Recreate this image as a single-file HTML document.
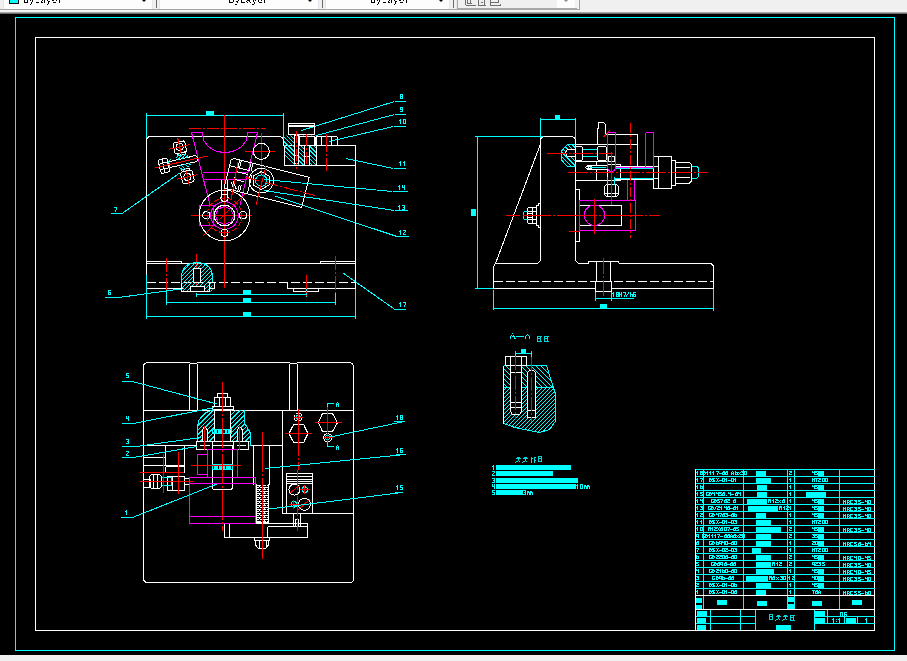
<!DOCTYPE html>
<html><head><meta charset="utf-8">
<style>
html,body{margin:0;padding:0;width:907px;height:661px;overflow:hidden;background:#f0f0f0;}
#tb{position:absolute;left:0;top:0;width:907px;height:9px;background:#f0f0f0;overflow:hidden;}
.dd{position:absolute;top:0;height:9px;background:#fdfdfd;overflow:hidden;}
.sep{position:absolute;top:0;height:9px;width:8px;background:#f0f0f0;border-left:1px solid #e4e6ee;border-right:1px solid #e4e6ee;box-sizing:border-box;}
.sep i{position:absolute;left:3px;top:0;width:1px;height:8px;background:#6a6a6a;}
.arr{position:absolute;top:0;width:0;height:0;border-left:2.5px solid transparent;border-right:2.5px solid transparent;border-top:2px solid #000;}
.tx{position:absolute;top:-7px;font-family:"Liberation Mono",monospace;font-size:12px;line-height:12px;color:#000;white-space:pre;}
#tbb{position:absolute;left:0;top:9px;width:907px;height:5px;background:linear-gradient(#f0f0f0 0,#f0f0f0 1px,#f2f2f2 1px,#f8f8f8 2px,#f0f0f0 2.5px,#b8b8b8 3.2px,#505050 5px);}
#tbl{position:absolute;left:0;top:9px;width:580px;height:1px;background:#a4a4a4;}
#cv{position:absolute;left:0;top:14px;width:907px;height:641px;background:#000;}
svg{position:absolute;left:0;top:0;}
</style></head><body>
<div id="tb">
<div class="dd" style="left:4px;width:148px;"></div>
<div style="position:absolute;left:3px;top:0;width:1px;height:9px;background:#e0e2ea"></div>
<div style="position:absolute;left:9px;top:-1px;width:8px;height:3px;background:#00ffff;border:1px solid #1a0a0a;"></div>

<div class="arr" style="left:142px;"></div>
<div class="sep" style="left:152px;"><i></i></div>
<div class="dd" style="left:160px;width:162px;"></div>

<div class="arr" style="left:308px;"></div>
<div class="sep" style="left:318px;"><i></i></div>
<div class="dd" style="left:326px;width:123px;"></div>

<div class="arr" style="left:439px;"></div>
<div class="sep" style="left:449px;"><i></i></div>
<div style="position:absolute;left:457px;top:-1px;width:120px;height:9px;background:#f0f0f0;border:1px solid #a8a8a8;border-top:none;"></div>
<div style="position:absolute;left:577px;top:0;width:3px;height:10px;background:#f4f4f4;border-right:1px solid #a0a0a0;box-sizing:border-box;"></div><div style="position:absolute;left:557px;top:0;width:18px;height:8px;background:#fcfcfc;"></div>
<svg style="position:absolute;left:0;top:0" width="907" height="9" shape-rendering="crispEdges"><defs><filter id="cr2"><feComponentTransfer><feFuncA type="discrete" tableValues="0 0 1 1"/></feComponentTransfer></filter></defs><g font-family="Liberation Mono, monospace" font-size="9.6px" fill="#000" filter="url(#cr2)"><text x="23" y="3.2">ByLayer</text><text x="228.5" y="3.2">ByLayer</text><text x="370" y="3.2">ByLayer</text></g><path d="M465.5 0V4.5M467.5 0V3.5H471.5M470 0V4M465.5 5.5H476M478.5 0V5.5M484.5 0V5.5M480.5 2.5H483M479 5.5H486M490.5 0V5.5H501M490.5 2.5H498.5V0M500.5 4V5.5" stroke="#6d6d6d" fill="none"/></svg>
<div class="arr" style="left:564px;border-top-color:#8a8a8a;"></div>
</div>
<div id="tbb"></div><div id="tbl"></div>
<div id="cv"></div>
<svg width="907" height="661" viewBox="0 0 907 661" shape-rendering="crispEdges" fill="none" stroke-width="1">
<defs><filter id="cr" x="-5%" y="-20%" width="110%" height="140%"><feComponentTransfer><feFuncA type="discrete" tableValues="0 1 1"/></feComponentTransfer></filter></defs>
<rect x="15.5" y="17.5" width="879" height="633" stroke="#00ffff"/>
<rect x="35.5" y="37.5" width="839" height="593" stroke="#ffffff"/>
<!-- VIEW 1 -->
<g id="v1">
<!-- dimensions cyan -->
<g stroke="#00ffff">
<path d="M146.5 115.5H283.5M146.5 113V140M283.5 113V141"/>
<path d="M196.5 294.5H306.5M166.5 302.5H335.5M146.5 316.5H355.5"/>
<path d="M146.5 275V319M166.5 290V305M196.5 293V297M306.5 289V297M335.5 293V305M355.5 289V319"/>
<!-- leaders -->
<path d="M394.5 101.5H406M394.5 101.5L301.5 130.5"/>
<path d="M394.5 114.5H406M394.5 114.5L316.5 135.5"/>
<path d="M393.5 126.5H406M393.5 126.5L329 141.5"/>
<path d="M393.5 168.5H406M393.5 168.5L346 158.5"/>
<path d="M392.5 191.5H408M392.5 191.5L264 179.5"/>
<path d="M394.5 210.5H408M394.5 210.5L264 190.5"/>
<path d="M397 236.5H409M397 236.5L275 196"/>
<path d="M395 309.5H406M395 309.5L343 273"/>
<path d="M105 297.5H118.5L184.5 288.5"/>
<path d="M112 340.5H123L165 313L" transform="translate(0,0)" opacity="0"/>
</g>
<g fill="#00ffff">
<rect x="206" y="111" width="8" height="4"/>
<rect x="243" y="290" width="8" height="5"/>
<rect x="243" y="298" width="8" height="5"/>
<rect x="243" y="312" width="8" height="5"/>
</g>
<!-- body white -->
<g stroke="#ffffff">
<path d="M146.5 275V140.5Q146.5 136.5 150.5 136.5H279Q283.5 136.5 283.5 141V145.5"/>
<path d="M283.5 145.5H355.5V288.5H287.5V282.5M283.5 165.5H355.5"/>
<path d="M146.5 261.5H181.5V263.5M146.5 263.5H355.5M320.5 263.5V261.5H355.5"/>
<path d="M146.5 282.5H355.5" stroke-dasharray="9 3"/>
<path d="M146.5 288.5H183M293.5 288.5V291.5H318.5V288.5"/>
</g>
<!-- red centerlines -->
<g stroke="#ff0000">
<path d="M224.5 115V287.5"/>
<path d="M189 128.5H266" stroke-dasharray="12 2 2 2"/>
<path d="M166.5 258V290M196.5 254V293M306.5 275V296M335.5 256V293" stroke-dasharray="14 2 2 2"/>
<path d="M245 151.5H275M261.5 133V175"/>
<path d="M191 215.5H252M224.5 215.5"/>
</g>
</g>

<g id="v1b">
<!-- magenta V block -->
<g stroke="#ff00ff">
<path d="M210 205L191.5 132.5H202L204 141Q211 152.5 225 152.5Q239 152.5 246 141L248 132.5H257.5L240 205"/>
<path d="M202.5 172.5H248M204 179.5H245.5M221.5 179.5V186"/>
<rect x="199.5" y="205.5" width="14" height="20"/>
<circle cx="224.5" cy="215.5" r="13.8"/>
<path d="M224.5 206.5L231 209L233.5 215.5L231 222L224.5 224.5L218 222L215.5 215.5L218 209Z"/>
</g>
<!-- flange white -->
<g stroke="#ffffff">
<circle cx="224.5" cy="215.5" r="25.4"/>
<circle cx="224.5" cy="215.5" r="10.3"/>
<circle cx="224.5" cy="197.8" r="3.6"/>
<circle cx="224.5" cy="232.7" r="3.6"/>
<circle cx="206.4" cy="215.2" r="3.6"/>
<circle cx="243" cy="215.2" r="3.6"/>
<path d="M221.5 179.5V198.5M227.5 179.5V198.5"/>
<circle cx="261.3" cy="151.4" r="8"/>
</g>
<g stroke="#ff0000">
<circle cx="224.5" cy="215.5" r="17.3" stroke-dasharray="5 2"/>
<path d="M203 236L246 193" stroke-dasharray="16 2 2 2"/>
</g>
<!-- clamp arm -->
<g transform="translate(231.6,158) rotate(14)" stroke="#ffffff">
<path d="M2 0H80V31H0V2Z"/>
<path d="M0 8H21M8.5 0V8M10 0V8M8 12V20H18M8 12H20M20 1V8M22 1V8M14 24V31M16 24V31M5 23L10 30M7 22L12 29M24 12V31"/>
</g>
<g stroke="#ffffff">
<circle cx="261.3" cy="180.6" r="12.2"/>
<path d="M261.3 171.5L269 176L269 185L261.3 189.5L253.5 185L253.5 176Z"/>
</g>
<circle cx="261.3" cy="180.6" r="5.7" stroke="#00ffff"/>
<path d="M245.4 177.2L314.7 195.4" stroke="#ff0000" stroke-dasharray="14 2 2 2"/>
<path d="M266 166L256 205M238 162L231 200" stroke="#ff0000"/>
<!-- part 7 bolt -->
<g transform="translate(181,162) rotate(-12.6)">
<g stroke="#ffffff">
<path d="M-12 -3H12M-12 3H12M12 -3Q17 -4 17 0Q17 4 12 3"/>
<path d="M-21 -7H-13V7H-21L-22 5V-5ZM-18 -7V7M-21 -3H-13M-21 3H-13"/>
<path d="M-3 -20L-4 -18V-10L-3 -9H7L8 -10V-18L7 -20ZM-2 -9V-7H6V-9"/>
<circle cx="2" cy="-15" r="3.5"/>
<path d="M-2 10L-3 12V20L-2 22H8L9 20V12L8 10ZM-1 10V8H7V10"/>
<circle cx="3" cy="16" r="3.5"/>
</g>
<g stroke="#00ffff"><path d="M-12 -3L-9 -5M-2 -3L3 -8M2 -3L6 -7M6 -3L8 -5M-4 -5L1 -9M-1 3L3 8M3 3L7 7M7 3L9 5M-3 5L1 9M-12 -3V3"/></g>
<g stroke="#ff0000"><path d="M-27 0H28M2 -24V-7M-9 -15H13M3 7V25M-8 16H14"/></g>
</g>
<!-- parts 8,9,10 on block -->
<clipPath id="cpB"><rect x="284" y="135.5" width="33" height="30"/></clipPath>
<g clip-path="url(#cpB)" stroke="#00ffff"><path d="M250.0 120l50 50M254.2 120l50 50M258.4 120l50 50M262.6 120l50 50M266.8 120l50 50M271.0 120l50 50M275.2 120l50 50M279.4 120l50 50M283.6 120l50 50M287.8 120l50 50M292.0 120l50 50M296.2 120l50 50M300.4 120l50 50M304.6 120l50 50M308.8 120l50 50M313.0 120l50 50M317.2 120l50 50M321.4 120l50 50M325.6 120l50 50M329.8 120l50 50M334.0 120l50 50M338.2 120l50 50"/></g>
<g stroke="#ffffff" fill="#000">
<path d="M288.5 123.5H314.5V134.5H288.5Z" fill="none"/>
<path d="M288.5 125.5H314.5M288.5 126.5H314.5" fill="none"/>
<path d="M294.5 135.5V163.5H298.5V135.5Z"/>
<path d="M299.5 136.5H314.5V145.5H299.5Z"/>
<path d="M304.5 145.5V165.5H309.5V145.5Z"/>
<path d="M298.5 155.5H294.5M304.5 156.5H309.5" fill="none"/>
<path d="M284.5 145.5V165.5H316.5V135.5" fill="none"/>
<path d="M317.5 136.5H335.5Q337.5 136.5 337.5 138.5V145.5H315.5V138.5Q315.5 136.5 317.5 136.5ZM321.5 136.5V145.5M331.5 136.5V145.5" fill="none"/>
</g>
<g stroke="#ff0000"><path d="M296.5 131V169M306.5 134V165" stroke-dasharray="12 2 2 2"/><path d="M326.5 134V171" stroke-dasharray="18 2 2 2"/></g>
<!-- part 6 dome -->
<g stroke="#00ffff">
<path d="M181.5 282.5V278Q181.5 263 197 262.5Q212.5 263 212.5 278V282.5"/>
<clipPath id="cpE"><path d="M181.5 291.5V278Q181.5 263 197 262.5Q212.5 263 212.5 278V291.5Z"/></clipPath>
<g clip-path="url(#cpE)"><path d="M150.0 300l40 -40M154.0 300l40 -40M158.0 300l40 -40M162.0 300l40 -40M166.0 300l40 -40M170.0 300l40 -40M174.0 300l40 -40M178.0 300l40 -40M182.0 300l40 -40M186.0 300l40 -40M190.0 300l40 -40M194.0 300l40 -40M198.0 300l40 -40M202.0 300l40 -40M206.0 300l40 -40M210.0 300l40 -40M214.0 300l40 -40M218.0 300l40 -40M222.0 300l40 -40M226.0 300l40 -40"/></g>
</g>
<g fill="#000" stroke="#ffffff"><path d="M193.5 282.5V268H200.5V282.5Z"/><path d="M190.5 286.5H204.5V291.5H190.5Z"/></g>
<g stroke="#ffffff">
<path d="M181.5 282.5V291.5H209V282.5H214.5V288.5H209"/>
</g>
</g>

<g id="v1labels" fill="#00ffff" font-family="Liberation Sans, sans-serif" filter="url(#cr)" font-size="6.5px">
<path fill="#00ffff" stroke="none" d="M400 94h3v1h-3zM400 95h1v1h-1zM402 95h1v1h-1zM400 96h3v1h-3zM400 97h1v1h-1zM402 97h1v1h-1zM400 98h3v1h-3z"/>
<path fill="#00ffff" stroke="none" d="M400 107h3v1h-3zM400 108h1v1h-1zM402 108h1v1h-1zM400 109h3v1h-3zM402 110h1v1h-1zM400 111h3v1h-3z"/>
<path fill="#00ffff" stroke="none" d="M400 119h1v1h-1zM399 120h2v1h-2zM400 121h1v1h-1zM400 122h1v1h-1zM400 123h1v1h-1zM403 119h3v1h-3zM403 120h1v1h-1zM405 120h1v1h-1zM403 121h1v1h-1zM405 121h1v1h-1zM403 122h1v1h-1zM405 122h1v1h-1zM403 123h3v1h-3z"/>
<path fill="#00ffff" stroke="none" d="M400 161h1v1h-1zM399 162h2v1h-2zM400 163h1v1h-1zM400 164h1v1h-1zM400 165h1v1h-1zM404 161h1v1h-1zM403 162h2v1h-2zM404 163h1v1h-1zM404 164h1v1h-1zM404 165h1v1h-1z"/>
<path fill="#00ffff" stroke="none" d="M399 185h1v1h-1zM398 186h2v1h-2zM399 187h1v1h-1zM399 188h1v1h-1zM399 189h1v1h-1zM402 185h1v1h-1zM404 185h1v1h-1zM402 186h1v1h-1zM404 186h1v1h-1zM402 187h3v1h-3zM404 188h1v1h-1zM404 189h1v1h-1z"/>
<path fill="#00ffff" stroke="none" d="M399 205h1v1h-1zM398 206h2v1h-2zM399 207h1v1h-1zM399 208h1v1h-1zM399 209h1v1h-1zM402 205h3v1h-3zM404 206h1v1h-1zM403 207h2v1h-2zM404 208h1v1h-1zM402 209h3v1h-3z"/>
<path fill="#00ffff" stroke="none" d="M400 230h1v1h-1zM399 231h2v1h-2zM400 232h1v1h-1zM400 233h1v1h-1zM400 234h1v1h-1zM403 230h3v1h-3zM405 231h1v1h-1zM404 232h1v1h-1zM403 233h1v1h-1zM403 234h3v1h-3z"/>
<path fill="#00ffff" stroke="none" d="M400 302h1v1h-1zM399 303h2v1h-2zM400 304h1v1h-1zM400 305h1v1h-1zM400 306h1v1h-1zM403 302h3v1h-3zM405 303h1v1h-1zM405 304h1v1h-1zM404 305h1v1h-1zM404 306h1v1h-1z"/>
<path fill="#00ffff" stroke="none" d="M114 207h3v1h-3zM116 208h1v1h-1zM116 209h1v1h-1zM115 210h1v1h-1zM115 211h1v1h-1z"/>
<path fill="#00ffff" stroke="none" d="M108 290h3v1h-3zM108 291h1v1h-1zM108 292h3v1h-3zM108 293h1v1h-1zM110 293h1v1h-1zM108 294h3v1h-3z"/>
</g>
<g stroke="#00ffff"><path d="M111 213.5H122L180.5 172.5"/></g>

<g id="v2">
<g stroke="#00ffff">
<path d="M475 136.5H557M477.5 136.5V288.5M475 288.5H506"/>
<path d="M540.5 119.5H575.5M540.5 118V139M575.5 118V143"/>
<path d="M493.5 308.5H713.5M493.5 290V310M713.5 289V311"/>
<path d="M595.5 298.5H634M595.5 291V301M611.5 291V301"/>

<path d="M575.5 144.5H567.5L561.5 151V160L567.5 166.5H575.5"/>
<clipPath id="cpP"><path d="M575.5 144.5H567.5L561.5 151V160L567.5 166.5H575.5Z"/></clipPath>
<g clip-path="url(#cpP)"><path d="M527.0 140l30 30M531.5 140l30 30M536.0 140l30 30M540.5 140l30 30M545.0 140l30 30M549.5 140l30 30M554.0 140l30 30M558.5 140l30 30M563.0 140l30 30M567.5 140l30 30M572.0 140l30 30M576.5 140l30 30"/></g>
</g>
<g fill="#00ffff">
<rect x="555" y="115" width="5" height="5"/>
<rect x="471" y="209" width="5" height="7"/>
<rect x="600" y="304" width="7" height="5"/>
<path fill="#00ffff" stroke="none" d="M613 292h1v1h-1zM612 293h2v1h-2zM613 294h1v1h-1zM613 295h1v1h-1zM613 296h1v1h-1zM616 292h3v1h-3zM616 293h1v1h-1zM618 293h1v1h-1zM616 294h3v1h-3zM616 295h1v1h-1zM618 295h1v1h-1zM616 296h3v1h-3zM619 292h1v1h-1zM621 292h1v1h-1zM619 293h1v1h-1zM621 293h1v1h-1zM619 294h3v1h-3zM619 295h1v1h-1zM621 295h1v1h-1zM619 296h1v1h-1zM621 296h1v1h-1zM623 292h3v1h-3zM625 293h1v1h-1zM625 294h1v1h-1zM624 295h1v1h-1zM624 296h1v1h-1zM628 292h1v1h-1zM628 293h1v1h-1zM627 294h1v1h-1zM626 295h1v1h-1zM626 296h1v1h-1zM630 292h1v1h-1zM630 293h1v1h-1zM630 294h3v1h-3zM630 295h1v1h-1zM632 295h1v1h-1zM630 296h1v1h-1zM632 296h1v1h-1zM633 292h3v1h-3zM633 293h1v1h-1zM633 294h3v1h-3zM633 295h1v1h-1zM635 295h1v1h-1zM633 296h3v1h-3z"/>
</g>
<g stroke="#ffffff">
<!-- upright -->
<path d="M540.5 260.5V141Q540.5 136.5 545 136.5H571Q575.5 136.5 575.5 141V260.5L578.5 263.5H588.5V261.5H596.5M540.5 260.5L537.5 263.5H495.5L493.5 266.5V288.5H595.5"/>
<path d="M540.5 144L495.5 263.5"/>
<path d="M610.5 261.5H618L619.5 263.5H711L713.5 266V288.5H611.5"/>
<path d="M493.5 281.5H713.5" stroke-dasharray="9 3"/>
<path d="M596.5 261.5V281.5M610.5 261.5V281.5M595.5 281.5V291.5H611.5V281.5M596.5 261.5H610.5M595.5 281.5H611.5"/>
<!-- bolt on upright -->
<path d="M540.5 203.5H538.5V205.5H536.5V225.5H538.5V227.5H540.5M536.5 207.5H528.5L527.5 209V222L528.5 223.5H536.5M527.5 211.5H536.5M527.5 219.5H536.5M532.5 207.5V223.5"/><circle cx="530" cy="215.5" r="2.5"/></g><g stroke="#00ffff"><path d="M527.5 211.5H524.5L523.5 213V218L524.5 219.5H527.5"/></g><g stroke="#ffffff">
<path d="M575.5 189.5H579.5V241.5H575.5"/>
<!-- right blocks -->
<path d="M575.5 149.5H567.5L565.5 153L567.5 156.5H575.5" fill="#000"/>
<path d="M575.5 144.5H637.5M607.5 134.5H637.5V165.5M575.5 161.5H607.5M575.5 180.5H620.5V164.5H607.5V180.5"/>
<path d="M596.5 161.5V180.5"/>
<path d="M597.5 144V131L598.5 126V122.5H603.5L605.5 124.5V133L607 134.5"/>
<rect x="575.5" y="146.5" width="7" height="14" rx="2"/>
<rect x="597.5" y="146.5" width="9" height="14" rx="2"/>
<rect x="608.5" y="156.5" width="6" height="5"/>
<path d="M585.5 167.5L588 165.5H607.5V169.5H588Z" fill="#000"/><rect x="588.5" y="166.5" width="3" height="2"/>
<path d="M579.5 205.5H621.5V225.5H579.5"/>
<!-- big screw -->
<path d="M653.5 156.5H671.5V188.5H653.5ZM658.5 156.5V188.5M653.5 166.5H658.5M653.5 178.5H658.5M671.5 160.5H675.5V185H671.5M675.5 162.5H689.5L691.5 164.5V181L689.5 183H675.5M675.5 167.5H689.5M675.5 177.5H689.5"/>
<path d="M615.5 166.5H653.5M613.5 179.5H653.5"/>
<path d="M606.5 184.5H616.5L618.5 186.5V194.5L616.5 196.5H606.5L604.5 194.5V186.5ZM607.5 184.5V196.5M615.5 184.5V196.5M604.5 193.5H618.5"/></g><g stroke="#00ffff"><path d="M607.5 176.5V184.5M614.5 176.5V184.5"/></g><g stroke="#ffffff">
</g>
<g stroke="#00ffff">
<path d="M691.5 166.5H697L698.5 168V176.5L697 178H691.5M615.5 168H653.5M613.5 178H653.5M582.5 149.5H597.5M582.5 156.5H597.5M590 167.5H606"/>
</g>
<g stroke="#ff00ff">
<path d="M607.5 132.5H615.5V166Q615.5 171.5 611 171.5Q607.5 171.5 607.5 166Z"/>
<path d="M645.5 132.5H653.5V167.5H615.5M645.5 132.5V167.5"/>
<path d="M627.5 179.5V200.5M634.5 179.5V200.5"/>
<rect x="579.5" y="200.5" width="56" height="30"/>
<circle cx="594.5" cy="215.3" r="10.2"/>
</g>
<g stroke="#ff0000">
<path d="M506 215.5H660" stroke-dasharray="14 3 28 2 2 2 40 2 2 2 40 2 2 2"/>
<path d="M594.5 198.5V234M611.5 152V205M569 231.5H580"/>
<path d="M630.5 123V238" stroke-dasharray="10 2 2 2"/>
<path d="M547 153.5H613M568 172.5H708" stroke-dasharray="20 2 2 2"/>
<path d="M603.5 137L610 130"/><path d="M603.5 258V296" stroke-dasharray="16 2 2 2"/>
</g>
</g>

<g id="secAA">
<g stroke="#00ffff"><path d="M512.5 333V334M511.5 335L510.5 336.5V338.5M513.5 335L514.5 336.5V338.5M511.5 336.5H513.5M509.5 338.5H510.5M514.5 338.5H515.5M516 336.5H524M527.5 334V335M526.5 335.5L525.5 337V338.5M528.5 335.5L529.5 337V338.5"/></g>
<path d="M536.5 336.5H541.5M537.5 336.5V341.5M540.5 336.5V341.5M537.5 338.5H540.5M536.5 341.5H541.5M539.5 335.5V336.5M543.5 336.5H548.5M544.5 336.5V341.5M547.5 336.5V341.5M544.5 338.5H547.5M543.5 341.5H548.5M546.5 335.5V336.5" stroke="#00ffff" opacity="0.85"/>
<path d="M515.5 458.5H520.5M518.5 456.5V460.5M515.5 462.5L518.5 460.5L520.5 462.5M516.5 457.5H519.5M522.5 458.5H527.5M525.5 456.5V460.5M522.5 462.5L525.5 460.5L527.5 462.5M523.5 457.5H526.5M531.5 456.5V462.5M530.5 458.5H532.5M533.5 457.5H535.5M534.5 456.5V462.5M533.5 460.5H535.5M534.5 458.5V461.5M538.5 456.5V461.5H541.5V456.5ZM538.5 458.5H541.5M537.5 462.5L538.5 461.5M542.5 462.5L541.5 461.5" stroke="#00ffff" opacity="0.85"/>

<g fill="#00ffff" font-family="Liberation Sans, sans-serif" filter="url(#cr)">


<rect x="521" y="349" width="5" height="5"/>
</g>
<g stroke="#00ffff">
<path d="M515.5 353.5H531.5M515.5 351V357M531.5 351V357"/>
<path d="M503.5 365.5H546.5L553 386.5L555.5 394V421L549.5 429.5L539.5 432.5L515 427.5L503.5 423.5"/>
<path d="M503.5 387.5H553"/>
<clipPath id="cpA1"><path d="M503.5 365.5H546.5L553 386.5V387.5H503.5Z"/></clipPath>
<clipPath id="cpA2"><path d="M503.5 387.5H553L555.5 394V421L549.5 429.5L539.5 432.5L515 427.5L503.5 423.5Z"/></clipPath>
<g clip-path="url(#cpA1)"><path d="M460.0 340l60 60M465.0 340l60 60M470.0 340l60 60M475.0 340l60 60M480.0 340l60 60M485.0 340l60 60M490.0 340l60 60M495.0 340l60 60M500.0 340l60 60M505.0 340l60 60M510.0 340l60 60M515.0 340l60 60M520.0 340l60 60M525.0 340l60 60M530.0 340l60 60M535.0 340l60 60M540.0 340l60 60M545.0 340l60 60M550.0 340l60 60M555.0 340l60 60M560.0 340l60 60M565.0 340l60 60"/></g>
<g clip-path="url(#cpA2)"><path d="M416.0 450l70 -70M420.0 450l70 -70M424.0 450l70 -70M428.0 450l70 -70M432.0 450l70 -70M436.0 450l70 -70M440.0 450l70 -70M444.0 450l70 -70M448.0 450l70 -70M452.0 450l70 -70M456.0 450l70 -70M460.0 450l70 -70M464.0 450l70 -70M468.0 450l70 -70M472.0 450l70 -70M476.0 450l70 -70M480.0 450l70 -70M484.0 450l70 -70M488.0 450l70 -70M492.0 450l70 -70M496.0 450l70 -70M500.0 450l70 -70M504.0 450l70 -70M508.0 450l70 -70M512.0 450l70 -70M516.0 450l70 -70M520.0 450l70 -70M524.0 450l70 -70M528.0 450l70 -70M532.0 450l70 -70M536.0 450l70 -70M540.0 450l70 -70M544.0 450l70 -70M548.0 450l70 -70M552.0 450l70 -70M556.0 450l70 -70M560.0 450l70 -70M564.0 450l70 -70M568.0 450l70 -70M572.0 450l70 -70M576.0 450l70 -70"/></g>
</g>
<g fill="#000" stroke="#ffffff">
<rect x="505.5" y="356.5" width="21" height="9"/>
<path d="M510.5 365.5V411.5L512.5 414.5H519.5L521.5 411.5V365.5Z"/>
<path d="M527.5 417.5V372.5L529.5 370.5H533.5L535.5 372.5V417.5Z"/>
<path d="M503.5 365.5V423.5" fill="none"/>
</g>
<g stroke="#ffffff"><path d="M510.5 356.5V365.5M521.5 356.5V365.5M510.5 402.5H521.5M510.5 407.5H521.5M527.5 410.5H535.5M510.5 372.5H521.5"/></g>
<g stroke="#ff0000"><path d="M515.5 356V419M531.5 357V421.5" stroke-dasharray="14 2 2 2"/></g>
</g>
<g id="tech" fill="#00ffff" font-family="Liberation Sans, sans-serif" filter="url(#cr)" font-size="5px">

<path fill="#00ffff" stroke="none" d="M493 465h1v1h-1zM492 466h2v1h-2zM493 467h1v1h-1zM493 468h1v1h-1zM493 469h1v1h-1zM496 469h1v1h-1z"/><rect x="496" y="465" width="75" height="5"/>
<path fill="#00ffff" stroke="none" d="M492 471h3v1h-3zM494 472h1v1h-1zM493 473h1v1h-1zM492 474h1v1h-1zM492 475h3v1h-3zM496 475h1v1h-1z"/><rect x="496" y="471" width="56.5" height="5"/>
<path fill="#00ffff" stroke="none" d="M492 478h3v1h-3zM494 479h1v1h-1zM493 480h2v1h-2zM494 481h1v1h-1zM492 482h3v1h-3zM496 482h1v1h-1z"/><rect x="496" y="477.7" width="81.5" height="5"/>
<path fill="#00ffff" stroke="none" d="M492 484h1v1h-1zM494 484h1v1h-1zM492 485h1v1h-1zM494 485h1v1h-1zM492 486h3v1h-3zM494 487h1v1h-1zM494 488h1v1h-1zM496 488h1v1h-1z"/><rect x="496" y="484" width="80" height="5"/><path fill="#00ffff" stroke="none" d="M577 484h1v1h-1zM576 485h2v1h-2zM577 486h1v1h-1zM577 487h1v1h-1zM577 488h1v1h-1zM580 484h3v1h-3zM580 485h1v1h-1zM582 485h1v1h-1zM580 486h1v1h-1zM582 486h1v1h-1zM580 487h1v1h-1zM582 487h1v1h-1zM580 488h3v1h-3zM584 485h2v1h-2zM584 486h3v1h-3zM584 487h1v1h-1zM586 487h1v1h-1zM584 488h1v1h-1zM586 488h1v1h-1zM587 485h2v1h-2zM587 486h3v1h-3zM587 487h1v1h-1zM589 487h1v1h-1zM587 488h1v1h-1zM589 488h1v1h-1z"/>
<path fill="#00ffff" stroke="none" d="M492 490h3v1h-3zM492 491h1v1h-1zM492 492h3v1h-3zM494 493h1v1h-1zM492 494h3v1h-3zM496 494h1v1h-1z"/><rect x="496" y="490.3" width="27" height="5"/><path fill="#00ffff" stroke="none" d="M523 490h3v1h-3zM525 491h1v1h-1zM524 492h2v1h-2zM525 493h1v1h-1zM523 494h3v1h-3zM527 491h2v1h-2zM527 492h3v1h-3zM527 493h1v1h-1zM529 493h1v1h-1zM527 494h1v1h-1zM529 494h1v1h-1zM530 491h2v1h-2zM530 492h3v1h-3zM530 493h1v1h-1zM532 493h1v1h-1zM530 494h1v1h-1zM532 494h1v1h-1z"/>
</g>

<g id="v3">
<!-- body -->
<g stroke="#ffffff">
<path d="M143.5 578.5V367Q143.5 362.5 148 362.5H189.5L190.5 363.5H196.5L197.5 362.5H289.5L290.5 363.5H296.5L297.5 362.5H349Q353.5 362.5 353.5 367V578.5Q353.5 582.5 349.5 582.5H148Q143.5 582.5 143.5 578.5Z"/>
<path d="M189.5 363.5V410.5M197.5 363.5V410.5M289.5 363.5V410.5M297.5 363.5V410.5"/>
<path d="M143.5 410.5H353.5"/>
<path d="M282.5 410.5V445.5M143.5 445.5H197M250.8 445.5H282.5"/>
<path d="M165.5 445.5V466M143.5 457.5H165.5M143.5 465.5H184.5M184.5 445.5V472M165.5 466.5H184.5V472H165.5V466.5"/>
<path d="M253.5 445.5V484.5M269.5 445.5V484.5"/>
<path d="M282.5 445.5V513.5H353.5M286.5 473.5H312.5V513.5H286.5ZM286.5 476.5H312.5M286.5 479.5H312.5M286.5 481.5H312.5M286.5 483.5H312.5"/>
<path d="M293.5 513.5V526.5M300.5 513.5V526.5M295.5 519.5H298.5V526.5H295.5Z"/>
<path d="M224.5 523.5H307.5V537.5H224.5ZM229.5 523.5V537.5M267.5 526.5V537.5M267.5 526.5H307.5"/>
<path d="M254.5 537.5H269.5V540.5H254.5ZM255.5 540.5V545L258.5 548.5H265.5L268.5 545V540.5M259.5 540.5V548M266.5 540.5V548"/>
<!-- part 5 nut -->
<path d="M217.5 393.5H227.5V397.5H217.5ZM214.5 397.5H230.5V406.5H214.5ZM212.5 406.5H233.5V409.5H212.5ZM219.5 397.5V406.5M225.5 397.5V406.5"/>
<!-- rod part 1 -->
<path d="M214.5 409.5V441.5H230.5V409.5M212.5 441.5V445.5H231.5V441.5"/>
<path d="M212.5 445.5V487Q212.5 489.5 215 489.5H230Q232.5 489.5 232.5 487V445.5"/>
<!-- part 3 bolts -->

<!-- knob left -->
<path d="M143.5 479.5H150.5V487.5H143.5"/>
<path d="M151.5 474.5H159.5L161.5 476.5V486.5L159.5 488.5H151.5L149.5 486.5V476.5Z M153.5 474.5V488.5M157.5 474.5V488.5"/>
<path d="M167.5 476.5H184.5V490.5H167.5ZM172.5 476.5V490.5M178.5 476.5V490.5M184.5 478.5H189.5V484.5H184.5"/>
<!-- circles in right block -->
<circle cx="294.4" cy="489.6" r="5.5"/>
<circle cx="304.4" cy="504.3" r="6"/>
<circle cx="298.1" cy="417.1" r="4"/>
<circle cx="327.6" cy="437.6" r="4"/>
<path d="M293.6 424.5H303.6L308 433.5L303.6 442.5H293.6L289 433.5Z"/>
<path d="M322.5 413.5H332.5L337.5 422.5L332.5 431.5H322.5L318.5 422.5Z"/>
</g>
<g stroke="#00ffff">
<circle cx="304.8" cy="489.6" r="2.8"/>
<circle cx="293.9" cy="504.3" r="2.8"/>
<circle cx="298.1" cy="417.1" r="2"/>
<circle cx="327.6" cy="437.6" r="2"/>
<path d="M161.5 477.5H171.5V485.5H161.5"/>
<!-- part 4 dome -->
<path d="M213.5 409.5L205 413L199 420L197.5 426V445.5M244.5 409.5V423L250.5 433V445.5"/>
<clipPath id="cpD"><path d="M213.5 410L205 413L199 420L197.5 426V445.5H250.5V433L244.5 423V410Z"/></clipPath>
<g clip-path="url(#cpD)"><path d="M122.0 470l64 -64M126.5 470l64 -64M131.0 470l64 -64M135.5 470l64 -64M140.0 470l64 -64M144.5 470l64 -64M149.0 470l64 -64M153.5 470l64 -64M158.0 470l64 -64M162.5 470l64 -64M167.0 470l64 -64M171.5 470l64 -64M176.0 470l64 -64M180.5 470l64 -64M185.0 470l64 -64M189.5 470l64 -64M194.0 470l64 -64M198.5 470l64 -64M203.0 470l64 -64M207.5 470l64 -64M212.0 470l64 -64M216.5 470l64 -64M221.0 470l64 -64M225.5 470l64 -64M230.0 470l64 -64M234.5 470l64 -64M239.0 470l64 -64M243.5 470l64 -64M248.0 470l64 -64M252.5 470l64 -64"/></g>

</g>
<g fill="#000" stroke="#ffffff">
<path d="M214.5 410.5V441.5H230.5V410.5Z"/>
<path d="M212.5 441.5H233.5V445.5H212.5Z"/>
<path d="M202.5 441.5V430L204.5 426.5L207.5 430V441.5Z"/>
<path d="M237.5 441.5V430L239.5 426.5L242.5 430V441.5Z"/>
<path d="M196.5 441.5H212.5V449.5H196.5Z"/>
<path d="M233.5 441.5H248.5V449.5H233.5Z"/>
</g>
<g stroke="#ffffff"><path d="M199.5 445.5H209.5M236.5 445.5H245.5"/></g>
<g stroke="#00ffff">
<!-- section marks -->
<path d="M327.5 407.5V403.5H334M327.5 442V446.5H334"/>
<!-- spring -->
</g>
<g stroke="#ffffff"><path d="M256 485.5H261M262 485.5H266M267 485.5H269M257 487.5H259M260 487.5H264M265 487.5H269M256 489.5H261M262 489.5H266M267 489.5H269M257 491.5H259M260 491.5H264M265 491.5H269M256 493.5H261M262 493.5H266M267 493.5H269M257 495.5H259M260 495.5H264M265 495.5H269M256 497.5H261M262 497.5H266M267 497.5H269M257 499.5H259M260 499.5H264M265 499.5H269M256 501.5H261M262 501.5H266M267 501.5H269M257 503.5H259M260 503.5H264M265 503.5H269M256 505.5H261M262 505.5H266M267 505.5H269M257 507.5H259M260 507.5H264M265 507.5H269M256 509.5H261M262 509.5H266M267 509.5H269M257 511.5H259M260 511.5H264M265 511.5H269M256 513.5H261M262 513.5H266M267 513.5H269M257 515.5H259M260 515.5H264M265 515.5H269M256 517.5H261M262 517.5H266M267 517.5H269M257 519.5H259M260 519.5H264M265 519.5H269M256 521.5H261M262 521.5H266M267 521.5H269M259.5 485V487M264.5 487V489M259.5 489V491M264.5 491V493M259.5 493V495M264.5 495V497M259.5 497V499M264.5 499V501M259.5 501V503M264.5 503V505M259.5 505V507M264.5 507V509M259.5 509V511M264.5 511V513M259.5 513V515M264.5 515V517M259.5 517V519M264.5 519V521M259.5 521V523M256.5 484V523M268.5 484V523M256 522.5H269"/></g>
<g fill="#00ffff">
<rect x="212" y="429" width="20" height="1"/><rect x="212" y="433" width="20" height="1"/><rect x="212" y="429" width="1" height="5"/><rect x="231" y="429" width="1" height="5"/><rect x="214" y="430" width="3" height="3"/><rect x="218" y="430" width="5" height="3"/><rect x="225" y="430" width="2" height="3"/><rect x="228" y="430" width="2" height="3"/>
<rect x="212" y="464" width="21" height="1"/><rect x="212" y="469" width="21" height="1"/><rect x="212" y="464" width="1" height="6"/><rect x="232" y="464" width="1" height="6"/><rect x="214" y="465" width="4" height="4"/><rect x="219" y="466" width="6" height="3"/><rect x="226" y="465" width="5" height="4"/>
<path fill="#00ffff" stroke="none" d="M337 402h1v1h-1zM336 403h1v1h-1zM338 403h1v1h-1zM336 404h3v1h-3zM336 405h1v1h-1zM338 405h1v1h-1zM336 406h1v1h-1zM338 406h1v1h-1z"/>
<path fill="#00ffff" stroke="none" d="M337 445h1v1h-1zM336 446h1v1h-1zM338 446h1v1h-1zM336 447h3v1h-3zM336 448h1v1h-1zM338 448h1v1h-1zM336 449h1v1h-1zM338 449h1v1h-1z"/>
</g>
<!-- magenta -->
<g stroke="#ff00ff">
<path d="M207.5 477.5V449.5H237.5V477.5M197.5 454.5H207.5V474.5H197.5Z"/>
<path d="M189.5 477.5H255.5V523.5H189.5ZM189.5 483.5H255.5M189.5 516.5H255.5"/>
</g>
<!-- red -->
<g stroke="#ff0000">
<path d="M222.5 382V531" stroke-dasharray="30 2 2 2"/>
<path d="M262.5 432V559" stroke-dasharray="40 2 2 2 200 0"/>
<path d="M298.5 409.5V470" stroke-dasharray="20 2 2 2"/><path d="M297.5 470V531" stroke-dasharray="20 2 2 2"/>
<path d="M191 465.5H241M140 481.5H193.5M140 472.5H184"/>
<path d="M163.5 453.5V493M178.5 452V493.5"/>
<path d="M284.5 433.5H312M314.5 422.5H342M327.5 407V432M298.5 409V443"/>
<path d="M204.5 426V450M239.5 426V450"/>
<path d="M289 494L300 485M298 510L310 499"/><path d="M293.5 417.5H302.5M323.5 437.5H332.5M327.5 433V442M299.5 489.5H310M288.5 504.5H299M304.5 485V494M293.5 500V509"/>
</g>
<!-- leaders + labels -->
<g stroke="#00ffff">
<path d="M121.5 381.5H132.5L217 404"/>
<path d="M121.5 423.5H133.5L214.5 407.5"/>
<path d="M121.5 446.5H136L201 437.5"/>
<path d="M121.5 457.5H133.5L197 446.5"/>
<path d="M121 517.5H132.5L217 484"/>
<path d="M393.5 421.5H404.5L330 437"/>
<path d="M395.5 454.5H405.5L265 468.5"/>
<path d="M394.5 492.5H402.5L269 509"/>
</g>
<g fill="#00ffff" font-family="Liberation Sans, sans-serif" filter="url(#cr)" font-size="6px">
<path fill="#00ffff" stroke="none" d="M126 373h3v1h-3zM126 374h1v1h-1zM126 375h3v1h-3zM128 376h1v1h-1zM126 377h3v1h-3z"/>
<path fill="#00ffff" stroke="none" d="M126 416h1v1h-1zM128 416h1v1h-1zM126 417h1v1h-1zM128 417h1v1h-1zM126 418h3v1h-3zM128 419h1v1h-1zM128 420h1v1h-1z"/>
<path fill="#00ffff" stroke="none" d="M126 439h3v1h-3zM128 440h1v1h-1zM127 441h2v1h-2zM128 442h1v1h-1zM126 443h3v1h-3z"/>
<path fill="#00ffff" stroke="none" d="M126 451h3v1h-3zM128 452h1v1h-1zM127 453h1v1h-1zM126 454h1v1h-1zM126 455h3v1h-3z"/>
<path fill="#00ffff" stroke="none" d="M126 510h1v1h-1zM125 511h2v1h-2zM126 512h1v1h-1zM126 513h1v1h-1zM126 514h1v1h-1z"/>
<path fill="#00ffff" stroke="none" d="M397 415h1v1h-1zM396 416h2v1h-2zM397 417h1v1h-1zM397 418h1v1h-1zM397 419h1v1h-1zM400 415h3v1h-3zM400 416h1v1h-1zM402 416h1v1h-1zM400 417h3v1h-3zM400 418h1v1h-1zM402 418h1v1h-1zM400 419h3v1h-3z"/>
<path fill="#00ffff" stroke="none" d="M397 448h1v1h-1zM396 449h2v1h-2zM397 450h1v1h-1zM397 451h1v1h-1zM397 452h1v1h-1zM400 448h3v1h-3zM400 449h1v1h-1zM400 450h3v1h-3zM400 451h1v1h-1zM402 451h1v1h-1zM400 452h3v1h-3z"/>
<path fill="#00ffff" stroke="none" d="M397 485h1v1h-1zM396 486h2v1h-2zM397 487h1v1h-1zM397 488h1v1h-1zM397 489h1v1h-1zM400 485h3v1h-3zM400 486h1v1h-1zM400 487h3v1h-3zM402 488h1v1h-1zM400 489h3v1h-3z"/>
</g>
</g>

<g id="bom">
<g stroke="#00ffff">
<path d="M695 469.5H874.5M695 476.5H874.5M695 483.5H874.5M695 490.5H874.5M695 497.5H874.5M695 504.5H874.5M695 511.5H874.5M695 518.5H874.5M695 525.5H874.5M695 532.5H874.5M695 539.5H874.5M695 546.5H874.5M695 553.5H874.5M695 560.5H874.5M695 567.5H874.5M695 574.5H874.5M695 581.5H874.5M695 588.5H874.5M703.5 469.5V609.5M743.5 469.5V609.5M787.5 469.5V609.5M794.5 469.5V609.5M839.5 469.5V609.5"/>
</g>
<g fill="#00ffff">
<path fill="#00ffff" stroke="none" d="M697 471h1v1h-1zM696 472h2v1h-2zM697 473h1v1h-1zM697 474h1v1h-1zM701 471h2v1h-2zM700 472h3v1h-3zM700 473h1v1h-1zM702 473h1v1h-1zM700 474h3v1h-3z"/>
<path fill="#00ffff" stroke="none" d="M700 471h3v1h-3zM700 472h1v1h-1zM700 473h1v1h-1zM702 473h1v1h-1zM700 474h3v1h-3zM703 471h2v1h-2zM703 472h3v1h-3zM703 473h1v1h-1zM705 473h1v1h-1zM703 474h2v1h-2zM707 471h1v1h-1zM706 472h2v1h-2zM707 473h1v1h-1zM707 474h1v1h-1zM710 471h1v1h-1zM709 472h2v1h-2zM710 473h1v1h-1zM710 474h1v1h-1zM713 471h1v1h-1zM712 472h2v1h-2zM713 473h1v1h-1zM713 474h1v1h-1zM716 471h3v1h-3zM718 472h1v1h-1zM717 473h1v1h-1zM717 474h1v1h-1zM719 473h3v1h-3zM723 471h2v1h-2zM722 472h3v1h-3zM722 473h1v1h-1zM724 473h1v1h-1zM722 474h3v1h-3zM726 471h2v1h-2zM725 472h3v1h-3zM725 473h1v1h-1zM727 473h1v1h-1zM725 474h3v1h-3zM732 471h1v1h-1zM731 472h1v1h-1zM733 472h1v1h-1zM731 473h3v1h-3zM731 474h1v1h-1zM733 474h1v1h-1zM735 471h1v1h-1zM735 472h3v1h-3zM735 473h1v1h-1zM737 473h1v1h-1zM735 474h3v1h-3zM738 472h1v1h-1zM740 472h1v1h-1zM739 473h1v1h-1zM738 474h1v1h-1zM740 474h1v1h-1zM741 471h3v1h-3zM742 472h2v1h-2zM743 473h1v1h-1zM741 474h3v1h-3zM744 471h3v1h-3zM744 472h1v1h-1zM746 472h1v1h-1zM744 473h1v1h-1zM746 473h1v1h-1zM744 474h3v1h-3z"/>
<rect x="756" y="471" width="10" height="5"/>
<path fill="#00ffff" stroke="none" d="M789 471h3v1h-3zM790 472h2v1h-2zM789 473h1v1h-1zM789 474h3v1h-3z"/>
<path fill="#00ffff" stroke="none" d="M812 471h1v1h-1zM814 471h1v1h-1zM812 472h3v1h-3zM814 473h1v1h-1zM814 474h1v1h-1zM815 471h3v1h-3zM815 472h2v1h-2zM817 473h1v1h-1zM815 474h3v1h-3z"/>
<rect x="818" y="471" width="6" height="5"/>
<path fill="#00ffff" stroke="none" d="M697 478h1v1h-1zM696 479h2v1h-2zM697 480h1v1h-1zM697 481h1v1h-1zM700 478h3v1h-3zM702 479h1v1h-1zM701 480h1v1h-1zM701 481h1v1h-1z"/>
<path fill="#00ffff" stroke="none" d="M709 478h2v1h-2zM709 479h3v1h-3zM709 480h1v1h-1zM711 480h1v1h-1zM709 481h2v1h-2zM712 478h3v1h-3zM712 479h2v1h-2zM713 480h2v1h-2zM712 481h3v1h-3zM716 478h1v1h-1zM718 478h1v1h-1zM717 479h1v1h-1zM717 480h1v1h-1zM716 481h1v1h-1zM718 481h1v1h-1zM719 480h3v1h-3zM722 478h3v1h-3zM722 479h1v1h-1zM724 479h1v1h-1zM722 480h1v1h-1zM724 480h1v1h-1zM722 481h3v1h-3zM726 478h1v1h-1zM725 479h2v1h-2zM726 480h1v1h-1zM726 481h1v1h-1zM728 480h3v1h-3zM731 478h3v1h-3zM731 479h1v1h-1zM733 479h1v1h-1zM731 480h1v1h-1zM733 480h1v1h-1zM731 481h3v1h-3zM735 478h1v1h-1zM734 479h2v1h-2zM735 480h1v1h-1zM735 481h1v1h-1z"/>
<rect x="756" y="478" width="15" height="5"/>
<path fill="#00ffff" stroke="none" d="M790 478h1v1h-1zM789 479h2v1h-2zM790 480h1v1h-1zM790 481h1v1h-1z"/>
<path fill="#00ffff" stroke="none" d="M812 478h1v1h-1zM814 478h1v1h-1zM812 479h3v1h-3zM812 480h1v1h-1zM814 480h1v1h-1zM812 481h1v1h-1zM814 481h1v1h-1zM815 478h3v1h-3zM816 479h1v1h-1zM816 480h1v1h-1zM816 481h1v1h-1zM818 478h3v1h-3zM819 479h2v1h-2zM818 480h1v1h-1zM818 481h3v1h-3zM822 478h3v1h-3zM822 479h1v1h-1zM824 479h1v1h-1zM822 480h1v1h-1zM824 480h1v1h-1zM822 481h3v1h-3zM825 478h3v1h-3zM825 479h1v1h-1zM827 479h1v1h-1zM825 480h1v1h-1zM827 480h1v1h-1zM825 481h3v1h-3z"/>
<path fill="#00ffff" stroke="none" d="M697 485h1v1h-1zM696 486h2v1h-2zM697 487h1v1h-1zM697 488h1v1h-1zM700 485h1v1h-1zM700 486h3v1h-3zM700 487h1v1h-1zM702 487h1v1h-1zM700 488h3v1h-3z"/>
<rect x="757" y="485" width="10" height="5"/>
<path fill="#00ffff" stroke="none" d="M790 485h1v1h-1zM789 486h2v1h-2zM790 487h1v1h-1zM790 488h1v1h-1z"/>
<path fill="#00ffff" stroke="none" d="M812 485h1v1h-1zM814 485h1v1h-1zM812 486h3v1h-3zM814 487h1v1h-1zM814 488h1v1h-1zM815 485h3v1h-3zM815 486h2v1h-2zM817 487h1v1h-1zM815 488h3v1h-3z"/>
<rect x="818" y="485" width="6" height="5"/>
<path fill="#00ffff" stroke="none" d="M697 492h1v1h-1zM696 493h2v1h-2zM697 494h1v1h-1zM697 495h1v1h-1zM700 492h3v1h-3zM700 493h2v1h-2zM702 494h1v1h-1zM700 495h3v1h-3z"/>
<path fill="#00ffff" stroke="none" d="M706 492h3v1h-3zM706 493h1v1h-1zM706 494h1v1h-1zM708 494h1v1h-1zM706 495h3v1h-3zM709 492h2v1h-2zM709 493h3v1h-3zM709 494h1v1h-1zM711 494h1v1h-1zM709 495h2v1h-2zM712 492h1v1h-1zM714 492h1v1h-1zM712 493h3v1h-3zM714 494h1v1h-1zM714 495h1v1h-1zM716 492h1v1h-1zM718 492h1v1h-1zM716 493h3v1h-3zM718 494h1v1h-1zM718 495h1v1h-1zM719 492h3v1h-3zM719 493h2v1h-2zM721 494h1v1h-1zM719 495h3v1h-3zM723 492h2v1h-2zM722 493h3v1h-3zM722 494h1v1h-1zM724 494h1v1h-1zM722 495h3v1h-3zM726 495h1v1h-1zM728 492h1v1h-1zM730 492h1v1h-1zM728 493h3v1h-3zM730 494h1v1h-1zM730 495h1v1h-1zM731 494h3v1h-3zM736 492h2v1h-2zM735 493h3v1h-3zM735 494h1v1h-1zM737 494h1v1h-1zM735 495h3v1h-3zM738 492h1v1h-1zM740 492h1v1h-1zM738 493h3v1h-3zM740 494h1v1h-1zM740 495h1v1h-1z"/>
<rect x="757" y="492" width="10" height="5"/>
<path fill="#00ffff" stroke="none" d="M790 492h1v1h-1zM789 493h2v1h-2zM790 494h1v1h-1zM790 495h1v1h-1z"/>
<rect x="806" y="492" width="20" height="5"/>
<path fill="#00ffff" stroke="none" d="M697 499h1v1h-1zM696 500h2v1h-2zM697 501h1v1h-1zM697 502h1v1h-1zM700 499h1v1h-1zM702 499h1v1h-1zM700 500h3v1h-3zM702 501h1v1h-1zM702 502h1v1h-1z"/>
<path fill="#00ffff" stroke="none" d="M711 499h3v1h-3zM711 500h1v1h-1zM711 501h1v1h-1zM713 501h1v1h-1zM711 502h3v1h-3zM714 499h2v1h-2zM714 500h3v1h-3zM714 501h1v1h-1zM716 501h1v1h-1zM714 502h2v1h-2zM717 499h3v1h-3zM717 500h2v1h-2zM719 501h1v1h-1zM717 502h3v1h-3zM720 499h3v1h-3zM722 500h1v1h-1zM721 501h1v1h-1zM721 502h1v1h-1zM725 499h2v1h-2zM724 500h3v1h-3zM724 501h1v1h-1zM726 501h1v1h-1zM724 502h3v1h-3zM727 499h3v1h-3zM728 500h2v1h-2zM727 501h1v1h-1zM727 502h3v1h-3zM734 499h2v1h-2zM733 500h3v1h-3zM733 501h1v1h-1zM735 501h1v1h-1zM733 502h3v1h-3z"/>
<rect x="747" y="499" width="20" height="5"/>
<path fill="#00ffff" stroke="none" d="M768 499h3v1h-3zM768 500h3v1h-3zM768 501h1v1h-1zM770 501h1v1h-1zM768 502h1v1h-1zM770 502h1v1h-1zM773 499h1v1h-1zM772 500h2v1h-2zM773 501h1v1h-1zM773 502h1v1h-1zM775 499h3v1h-3zM776 500h2v1h-2zM775 501h1v1h-1zM775 502h3v1h-3zM778 500h1v1h-1zM780 500h1v1h-1zM779 501h1v1h-1zM778 502h1v1h-1zM780 502h1v1h-1zM783 499h2v1h-2zM782 500h3v1h-3zM782 501h1v1h-1zM784 501h1v1h-1zM782 502h3v1h-3z"/>
<path fill="#00ffff" stroke="none" d="M790 499h1v1h-1zM789 500h2v1h-2zM790 501h1v1h-1zM790 502h1v1h-1z"/>
<path fill="#00ffff" stroke="none" d="M812 499h1v1h-1zM814 499h1v1h-1zM812 500h3v1h-3zM814 501h1v1h-1zM814 502h1v1h-1zM815 499h3v1h-3zM815 500h2v1h-2zM817 501h1v1h-1zM815 502h3v1h-3z"/>
<rect x="818" y="499" width="6" height="5"/>
<path fill="#00ffff" stroke="none" d="M843 500h1v1h-1zM845 500h1v1h-1zM843 501h3v1h-3zM843 502h1v1h-1zM845 502h1v1h-1zM843 503h1v1h-1zM845 503h1v1h-1zM847 500h2v1h-2zM847 501h1v1h-1zM849 501h1v1h-1zM847 502h2v1h-2zM847 503h1v1h-1zM849 503h1v1h-1zM850 500h3v1h-3zM850 501h1v1h-1zM850 502h1v1h-1zM850 503h3v1h-3zM854 500h3v1h-3zM855 501h2v1h-2zM856 502h1v1h-1zM854 503h3v1h-3zM858 500h3v1h-3zM858 501h2v1h-2zM860 502h1v1h-1zM858 503h3v1h-3zM861 502h3v1h-3zM865 500h1v1h-1zM867 500h1v1h-1zM865 501h3v1h-3zM867 502h1v1h-1zM867 503h1v1h-1zM868 500h3v1h-3zM868 501h1v1h-1zM870 501h1v1h-1zM868 502h1v1h-1zM870 502h1v1h-1zM868 503h3v1h-3z"/>
<path fill="#00ffff" stroke="none" d="M697 506h1v1h-1zM696 507h2v1h-2zM697 508h1v1h-1zM697 509h1v1h-1zM700 506h3v1h-3zM701 507h2v1h-2zM702 508h1v1h-1zM700 509h3v1h-3z"/>
<path fill="#00ffff" stroke="none" d="M708 506h3v1h-3zM708 507h1v1h-1zM708 508h1v1h-1zM710 508h1v1h-1zM708 509h3v1h-3zM711 506h2v1h-2zM711 507h3v1h-3zM711 508h1v1h-1zM713 508h1v1h-1zM711 509h2v1h-2zM716 506h1v1h-1zM715 507h1v1h-1zM715 508h1v1h-1zM714 509h1v1h-1zM717 506h3v1h-3zM718 507h2v1h-2zM717 508h1v1h-1zM717 509h3v1h-3zM721 506h1v1h-1zM720 507h2v1h-2zM721 508h1v1h-1zM721 509h1v1h-1zM724 506h1v1h-1zM726 506h1v1h-1zM724 507h3v1h-3zM726 508h1v1h-1zM726 509h1v1h-1zM728 506h2v1h-2zM727 507h3v1h-3zM727 508h1v1h-1zM729 508h1v1h-1zM727 509h3v1h-3zM730 508h3v1h-3zM734 506h2v1h-2zM733 507h3v1h-3zM733 508h1v1h-1zM735 508h1v1h-1zM733 509h3v1h-3zM737 506h1v1h-1zM736 507h2v1h-2zM737 508h1v1h-1zM737 509h1v1h-1z"/>
<rect x="748" y="506" width="30" height="5"/>
<path fill="#00ffff" stroke="none" d="M779 506h3v1h-3zM779 507h3v1h-3zM779 508h1v1h-1zM781 508h1v1h-1zM779 509h1v1h-1zM781 509h1v1h-1zM784 506h1v1h-1zM783 507h2v1h-2zM784 508h1v1h-1zM784 509h1v1h-1zM786 506h3v1h-3zM787 507h2v1h-2zM786 508h1v1h-1zM786 509h3v1h-3z"/>
<path fill="#00ffff" stroke="none" d="M790 506h1v1h-1zM789 507h2v1h-2zM790 508h1v1h-1zM790 509h1v1h-1z"/>
<path fill="#00ffff" stroke="none" d="M812 506h1v1h-1zM814 506h1v1h-1zM812 507h3v1h-3zM814 508h1v1h-1zM814 509h1v1h-1zM815 506h3v1h-3zM815 507h2v1h-2zM817 508h1v1h-1zM815 509h3v1h-3z"/>
<rect x="818" y="506" width="6" height="5"/>
<path fill="#00ffff" stroke="none" d="M843 507h1v1h-1zM845 507h1v1h-1zM843 508h3v1h-3zM843 509h1v1h-1zM845 509h1v1h-1zM843 510h1v1h-1zM845 510h1v1h-1zM847 507h2v1h-2zM847 508h1v1h-1zM849 508h1v1h-1zM847 509h2v1h-2zM847 510h1v1h-1zM849 510h1v1h-1zM850 507h3v1h-3zM850 508h1v1h-1zM850 509h1v1h-1zM850 510h3v1h-3zM854 507h3v1h-3zM855 508h2v1h-2zM856 509h1v1h-1zM854 510h3v1h-3zM858 507h3v1h-3zM858 508h2v1h-2zM860 509h1v1h-1zM858 510h3v1h-3zM861 509h3v1h-3zM865 507h1v1h-1zM867 507h1v1h-1zM865 508h3v1h-3zM867 509h1v1h-1zM867 510h1v1h-1zM868 507h3v1h-3zM868 508h1v1h-1zM870 508h1v1h-1zM868 509h1v1h-1zM870 509h1v1h-1zM868 510h3v1h-3z"/>
<path fill="#00ffff" stroke="none" d="M697 513h1v1h-1zM696 514h2v1h-2zM697 515h1v1h-1zM697 516h1v1h-1zM700 513h3v1h-3zM701 514h2v1h-2zM700 515h1v1h-1zM700 516h3v1h-3z"/>
<path fill="#00ffff" stroke="none" d="M709 513h3v1h-3zM709 514h1v1h-1zM709 515h1v1h-1zM711 515h1v1h-1zM709 516h3v1h-3zM712 513h2v1h-2zM712 514h3v1h-3zM712 515h1v1h-1zM714 515h1v1h-1zM712 516h2v1h-2zM716 513h1v1h-1zM718 513h1v1h-1zM716 514h3v1h-3zM718 515h1v1h-1zM718 516h1v1h-1zM719 513h3v1h-3zM721 514h1v1h-1zM720 515h1v1h-1zM720 516h1v1h-1zM723 513h2v1h-2zM722 514h3v1h-3zM722 515h1v1h-1zM724 515h1v1h-1zM722 516h3v1h-3zM725 513h3v1h-3zM726 514h2v1h-2zM727 515h1v1h-1zM725 516h3v1h-3zM728 515h3v1h-3zM732 513h2v1h-2zM731 514h3v1h-3zM731 515h1v1h-1zM733 515h1v1h-1zM731 516h3v1h-3zM734 513h1v1h-1zM734 514h3v1h-3zM734 515h1v1h-1zM736 515h1v1h-1zM734 516h3v1h-3z"/>
<rect x="756" y="513" width="10" height="5"/>
<path fill="#00ffff" stroke="none" d="M790 513h1v1h-1zM789 514h2v1h-2zM790 515h1v1h-1zM790 516h1v1h-1z"/>
<path fill="#00ffff" stroke="none" d="M812 513h1v1h-1zM814 513h1v1h-1zM812 514h3v1h-3zM814 515h1v1h-1zM814 516h1v1h-1zM815 513h3v1h-3zM815 514h2v1h-2zM817 515h1v1h-1zM815 516h3v1h-3z"/>
<rect x="818" y="513" width="6" height="5"/>
<path fill="#00ffff" stroke="none" d="M843 514h1v1h-1zM845 514h1v1h-1zM843 515h3v1h-3zM843 516h1v1h-1zM845 516h1v1h-1zM843 517h1v1h-1zM845 517h1v1h-1zM847 514h2v1h-2zM847 515h1v1h-1zM849 515h1v1h-1zM847 516h2v1h-2zM847 517h1v1h-1zM849 517h1v1h-1zM850 514h3v1h-3zM850 515h1v1h-1zM850 516h1v1h-1zM850 517h3v1h-3zM854 514h3v1h-3zM855 515h2v1h-2zM856 516h1v1h-1zM854 517h3v1h-3zM858 514h3v1h-3zM858 515h2v1h-2zM860 516h1v1h-1zM858 517h3v1h-3zM861 516h3v1h-3zM865 514h1v1h-1zM867 514h1v1h-1zM865 515h3v1h-3zM867 516h1v1h-1zM867 517h1v1h-1zM868 514h3v1h-3zM868 515h1v1h-1zM870 515h1v1h-1zM868 516h1v1h-1zM870 516h1v1h-1zM868 517h3v1h-3z"/>
<path fill="#00ffff" stroke="none" d="M697 520h1v1h-1zM696 521h2v1h-2zM697 522h1v1h-1zM697 523h1v1h-1zM701 520h1v1h-1zM700 521h2v1h-2zM701 522h1v1h-1zM701 523h1v1h-1z"/>
<path fill="#00ffff" stroke="none" d="M709 520h2v1h-2zM709 521h3v1h-3zM709 522h1v1h-1zM711 522h1v1h-1zM709 523h2v1h-2zM712 520h3v1h-3zM712 521h2v1h-2zM713 522h2v1h-2zM712 523h3v1h-3zM716 520h1v1h-1zM718 520h1v1h-1zM717 521h1v1h-1zM717 522h1v1h-1zM716 523h1v1h-1zM718 523h1v1h-1zM719 522h3v1h-3zM722 520h3v1h-3zM722 521h1v1h-1zM724 521h1v1h-1zM722 522h1v1h-1zM724 522h1v1h-1zM722 523h3v1h-3zM726 520h1v1h-1zM725 521h2v1h-2zM726 522h1v1h-1zM726 523h1v1h-1zM728 522h3v1h-3zM731 520h3v1h-3zM731 521h1v1h-1zM733 521h1v1h-1zM731 522h1v1h-1zM733 522h1v1h-1zM731 523h3v1h-3zM734 520h3v1h-3zM735 521h2v1h-2zM736 522h1v1h-1zM734 523h3v1h-3z"/>
<rect x="756" y="520" width="15" height="5"/>
<path fill="#00ffff" stroke="none" d="M790 520h1v1h-1zM789 521h2v1h-2zM790 522h1v1h-1zM790 523h1v1h-1z"/>
<path fill="#00ffff" stroke="none" d="M812 520h1v1h-1zM814 520h1v1h-1zM812 521h3v1h-3zM812 522h1v1h-1zM814 522h1v1h-1zM812 523h1v1h-1zM814 523h1v1h-1zM815 520h3v1h-3zM816 521h1v1h-1zM816 522h1v1h-1zM816 523h1v1h-1zM818 520h3v1h-3zM819 521h2v1h-2zM818 522h1v1h-1zM818 523h3v1h-3zM822 520h3v1h-3zM822 521h1v1h-1zM824 521h1v1h-1zM822 522h1v1h-1zM824 522h1v1h-1zM822 523h3v1h-3zM825 520h3v1h-3zM825 521h1v1h-1zM827 521h1v1h-1zM825 522h1v1h-1zM827 522h1v1h-1zM825 523h3v1h-3z"/>
<path fill="#00ffff" stroke="none" d="M697 527h1v1h-1zM696 528h2v1h-2zM697 529h1v1h-1zM697 530h1v1h-1zM700 527h3v1h-3zM700 528h1v1h-1zM702 528h1v1h-1zM700 529h1v1h-1zM702 529h1v1h-1zM700 530h3v1h-3z"/>
<path fill="#00ffff" stroke="none" d="M708 527h3v1h-3zM708 528h3v1h-3zM708 529h1v1h-1zM710 529h1v1h-1zM708 530h1v1h-1zM710 530h1v1h-1zM712 527h1v1h-1zM711 528h2v1h-2zM712 529h1v1h-1zM712 530h1v1h-1zM714 527h3v1h-3zM715 528h2v1h-2zM714 529h1v1h-1zM714 530h3v1h-3zM717 527h1v1h-1zM719 527h1v1h-1zM718 528h1v1h-1zM718 529h1v1h-1zM717 530h1v1h-1zM719 530h1v1h-1zM721 527h2v1h-2zM720 528h3v1h-3zM720 529h1v1h-1zM722 529h1v1h-1zM720 530h3v1h-3zM724 527h3v1h-3zM724 528h1v1h-1zM726 528h1v1h-1zM724 529h1v1h-1zM726 529h1v1h-1zM724 530h3v1h-3zM727 527h3v1h-3zM729 528h1v1h-1zM728 529h1v1h-1zM728 530h1v1h-1zM730 529h3v1h-3zM734 527h2v1h-2zM733 528h3v1h-3zM733 529h1v1h-1zM735 529h1v1h-1zM733 530h3v1h-3zM736 527h3v1h-3zM736 528h2v1h-2zM738 529h1v1h-1zM736 530h3v1h-3z"/>
<rect x="756" y="527" width="25" height="5"/>
<path fill="#00ffff" stroke="none" d="M789 527h3v1h-3zM790 528h2v1h-2zM789 529h1v1h-1zM789 530h3v1h-3z"/>
<path fill="#00ffff" stroke="none" d="M812 527h1v1h-1zM814 527h1v1h-1zM812 528h3v1h-3zM814 529h1v1h-1zM814 530h1v1h-1zM815 527h3v1h-3zM815 528h2v1h-2zM817 529h1v1h-1zM815 530h3v1h-3z"/>
<rect x="818" y="527" width="6" height="5"/>
<path fill="#00ffff" stroke="none" d="M843 528h1v1h-1zM845 528h1v1h-1zM843 529h3v1h-3zM843 530h1v1h-1zM845 530h1v1h-1zM843 531h1v1h-1zM845 531h1v1h-1zM847 528h2v1h-2zM847 529h1v1h-1zM849 529h1v1h-1zM847 530h2v1h-2zM847 531h1v1h-1zM849 531h1v1h-1zM850 528h3v1h-3zM850 529h1v1h-1zM850 530h1v1h-1zM850 531h3v1h-3zM854 528h3v1h-3zM855 529h2v1h-2zM856 530h1v1h-1zM854 531h3v1h-3zM858 528h3v1h-3zM858 529h2v1h-2zM860 530h1v1h-1zM858 531h3v1h-3zM861 530h3v1h-3zM865 528h1v1h-1zM867 528h1v1h-1zM865 529h3v1h-3zM867 530h1v1h-1zM867 531h1v1h-1zM868 528h3v1h-3zM868 529h1v1h-1zM870 529h1v1h-1zM868 530h1v1h-1zM870 530h1v1h-1zM868 531h3v1h-3z"/>
<path fill="#00ffff" stroke="none" d="M696 534h3v1h-3zM696 535h1v1h-1zM698 535h1v1h-1zM696 536h3v1h-3zM698 537h1v1h-1z"/>
<path fill="#00ffff" stroke="none" d="M702 534h3v1h-3zM702 535h1v1h-1zM702 536h1v1h-1zM704 536h1v1h-1zM702 537h3v1h-3zM705 534h2v1h-2zM705 535h3v1h-3zM705 536h1v1h-1zM707 536h1v1h-1zM705 537h2v1h-2zM709 534h1v1h-1zM708 535h2v1h-2zM709 536h1v1h-1zM709 537h1v1h-1zM712 534h1v1h-1zM711 535h2v1h-2zM712 536h1v1h-1zM712 537h1v1h-1zM715 534h1v1h-1zM714 535h2v1h-2zM715 536h1v1h-1zM715 537h1v1h-1zM717 534h3v1h-3zM719 535h1v1h-1zM718 536h1v1h-1zM718 537h1v1h-1zM720 536h3v1h-3zM725 534h2v1h-2zM724 535h3v1h-3zM724 536h1v1h-1zM726 536h1v1h-1zM724 537h3v1h-3zM728 534h2v1h-2zM727 535h3v1h-3zM727 536h1v1h-1zM729 536h1v1h-1zM727 537h3v1h-3zM731 534h1v1h-1zM730 535h1v1h-1zM732 535h1v1h-1zM730 536h3v1h-3zM730 537h1v1h-1zM732 537h1v1h-1zM734 534h2v1h-2zM733 535h3v1h-3zM733 536h1v1h-1zM735 536h1v1h-1zM733 537h3v1h-3zM736 535h1v1h-1zM738 535h1v1h-1zM737 536h1v1h-1zM736 537h1v1h-1zM738 537h1v1h-1zM739 534h3v1h-3zM740 535h2v1h-2zM739 536h1v1h-1zM739 537h3v1h-3zM742 534h3v1h-3zM742 535h1v1h-1zM744 535h1v1h-1zM742 536h1v1h-1zM744 536h1v1h-1zM742 537h3v1h-3z"/>
<rect x="756" y="534" width="15" height="5"/>
<path fill="#00ffff" stroke="none" d="M789 534h3v1h-3zM790 535h2v1h-2zM789 536h1v1h-1zM789 537h3v1h-3z"/>
<path fill="#00ffff" stroke="none" d="M812 534h3v1h-3zM813 535h2v1h-2zM814 536h1v1h-1zM812 537h3v1h-3zM815 534h3v1h-3zM815 535h2v1h-2zM817 536h1v1h-1zM815 537h3v1h-3z"/>
<rect x="818" y="534" width="6" height="5"/>
<path fill="#00ffff" stroke="none" d="M697 541h2v1h-2zM696 542h3v1h-3zM696 543h1v1h-1zM698 543h1v1h-1zM696 544h3v1h-3z"/>
<path fill="#00ffff" stroke="none" d="M709 541h3v1h-3zM709 542h1v1h-1zM709 543h1v1h-1zM711 543h1v1h-1zM709 544h3v1h-3zM712 541h2v1h-2zM712 542h3v1h-3zM712 543h1v1h-1zM714 543h1v1h-1zM712 544h2v1h-2zM716 541h1v1h-1zM716 542h3v1h-3zM716 543h1v1h-1zM718 543h1v1h-1zM716 544h3v1h-3zM719 541h3v1h-3zM719 542h1v1h-1zM721 542h1v1h-1zM719 543h3v1h-3zM721 544h1v1h-1zM722 541h1v1h-1zM724 541h1v1h-1zM722 542h3v1h-3zM724 543h1v1h-1zM724 544h1v1h-1zM725 541h3v1h-3zM725 542h1v1h-1zM727 542h1v1h-1zM725 543h1v1h-1zM727 543h1v1h-1zM725 544h3v1h-3zM728 543h3v1h-3zM732 541h2v1h-2zM731 542h3v1h-3zM731 543h1v1h-1zM733 543h1v1h-1zM731 544h3v1h-3zM734 541h3v1h-3zM734 542h1v1h-1zM736 542h1v1h-1zM734 543h1v1h-1zM736 543h1v1h-1zM734 544h3v1h-3z"/>
<rect x="756" y="541" width="15" height="5"/>
<path fill="#00ffff" stroke="none" d="M790 541h1v1h-1zM789 542h2v1h-2zM790 543h1v1h-1zM790 544h1v1h-1z"/>
<path fill="#00ffff" stroke="none" d="M812 541h3v1h-3zM813 542h2v1h-2zM812 543h1v1h-1zM812 544h3v1h-3zM815 541h3v1h-3zM815 542h1v1h-1zM817 542h1v1h-1zM815 543h1v1h-1zM817 543h1v1h-1zM815 544h3v1h-3z"/>
<rect x="818" y="541" width="6" height="5"/>
<path fill="#00ffff" stroke="none" d="M843 542h1v1h-1zM845 542h1v1h-1zM843 543h3v1h-3zM843 544h1v1h-1zM845 544h1v1h-1zM843 545h1v1h-1zM845 545h1v1h-1zM847 542h2v1h-2zM847 543h1v1h-1zM849 543h1v1h-1zM847 544h2v1h-2zM847 545h1v1h-1zM849 545h1v1h-1zM850 542h3v1h-3zM850 543h1v1h-1zM850 544h1v1h-1zM850 545h3v1h-3zM854 542h3v1h-3zM854 543h2v1h-2zM856 544h1v1h-1zM854 545h3v1h-3zM859 542h2v1h-2zM858 543h3v1h-3zM858 544h1v1h-1zM860 544h1v1h-1zM858 545h3v1h-3zM861 544h3v1h-3zM865 542h1v1h-1zM865 543h3v1h-3zM865 544h1v1h-1zM867 544h1v1h-1zM865 545h3v1h-3zM868 542h1v1h-1zM870 542h1v1h-1zM868 543h3v1h-3zM870 544h1v1h-1zM870 545h1v1h-1z"/>
<path fill="#00ffff" stroke="none" d="M696 548h3v1h-3zM698 549h1v1h-1zM697 550h1v1h-1zM697 551h1v1h-1z"/>
<path fill="#00ffff" stroke="none" d="M709 548h2v1h-2zM709 549h3v1h-3zM709 550h1v1h-1zM711 550h1v1h-1zM709 551h2v1h-2zM712 548h3v1h-3zM712 549h2v1h-2zM713 550h2v1h-2zM712 551h3v1h-3zM716 548h1v1h-1zM718 548h1v1h-1zM717 549h1v1h-1zM717 550h1v1h-1zM716 551h1v1h-1zM718 551h1v1h-1zM719 550h3v1h-3zM722 548h3v1h-3zM722 549h1v1h-1zM724 549h1v1h-1zM722 550h1v1h-1zM724 550h1v1h-1zM722 551h3v1h-3zM725 548h3v1h-3zM726 549h2v1h-2zM725 550h1v1h-1zM725 551h3v1h-3zM728 550h3v1h-3zM731 548h3v1h-3zM731 549h1v1h-1zM733 549h1v1h-1zM731 550h1v1h-1zM733 550h1v1h-1zM731 551h3v1h-3zM734 548h3v1h-3zM735 549h2v1h-2zM736 550h1v1h-1zM734 551h3v1h-3z"/>
<rect x="752" y="548" width="9" height="5"/>
<path fill="#00ffff" stroke="none" d="M790 548h1v1h-1zM789 549h2v1h-2zM790 550h1v1h-1zM790 551h1v1h-1z"/>
<path fill="#00ffff" stroke="none" d="M812 548h1v1h-1zM814 548h1v1h-1zM812 549h3v1h-3zM812 550h1v1h-1zM814 550h1v1h-1zM812 551h1v1h-1zM814 551h1v1h-1zM815 548h3v1h-3zM816 549h1v1h-1zM816 550h1v1h-1zM816 551h1v1h-1zM818 548h3v1h-3zM819 549h2v1h-2zM818 550h1v1h-1zM818 551h3v1h-3zM822 548h3v1h-3zM822 549h1v1h-1zM824 549h1v1h-1zM822 550h1v1h-1zM824 550h1v1h-1zM822 551h3v1h-3zM825 548h3v1h-3zM825 549h1v1h-1zM827 549h1v1h-1zM825 550h1v1h-1zM827 550h1v1h-1zM825 551h3v1h-3z"/>
<path fill="#00ffff" stroke="none" d="M696 555h1v1h-1zM696 556h3v1h-3zM696 557h1v1h-1zM698 557h1v1h-1zM696 558h3v1h-3z"/>
<path fill="#00ffff" stroke="none" d="M709 555h3v1h-3zM709 556h1v1h-1zM709 557h1v1h-1zM711 557h1v1h-1zM709 558h3v1h-3zM712 555h2v1h-2zM712 556h3v1h-3zM712 557h1v1h-1zM714 557h1v1h-1zM712 558h2v1h-2zM716 555h3v1h-3zM717 556h2v1h-2zM716 557h1v1h-1zM716 558h3v1h-3zM719 555h3v1h-3zM720 556h2v1h-2zM719 557h1v1h-1zM719 558h3v1h-3zM722 555h3v1h-3zM722 556h1v1h-1zM724 556h1v1h-1zM722 557h1v1h-1zM724 557h1v1h-1zM722 558h3v1h-3zM726 555h2v1h-2zM725 556h3v1h-3zM725 557h1v1h-1zM727 557h1v1h-1zM725 558h3v1h-3zM728 557h3v1h-3zM732 555h2v1h-2zM731 556h3v1h-3zM731 557h1v1h-1zM733 557h1v1h-1zM731 558h3v1h-3zM734 555h3v1h-3zM734 556h1v1h-1zM736 556h1v1h-1zM734 557h1v1h-1zM736 557h1v1h-1zM734 558h3v1h-3z"/>
<rect x="756" y="555" width="15" height="5"/>
<path fill="#00ffff" stroke="none" d="M789 555h3v1h-3zM790 556h2v1h-2zM789 557h1v1h-1zM789 558h3v1h-3z"/>
<path fill="#00ffff" stroke="none" d="M812 555h1v1h-1zM814 555h1v1h-1zM812 556h3v1h-3zM814 557h1v1h-1zM814 558h1v1h-1zM815 555h3v1h-3zM815 556h2v1h-2zM817 557h1v1h-1zM815 558h3v1h-3z"/>
<rect x="818" y="555" width="6" height="5"/>
<path fill="#00ffff" stroke="none" d="M843 556h1v1h-1zM845 556h1v1h-1zM843 557h3v1h-3zM843 558h1v1h-1zM845 558h1v1h-1zM843 559h1v1h-1zM845 559h1v1h-1zM847 556h2v1h-2zM847 557h1v1h-1zM849 557h1v1h-1zM847 558h2v1h-2zM847 559h1v1h-1zM849 559h1v1h-1zM850 556h3v1h-3zM850 557h1v1h-1zM850 558h1v1h-1zM850 559h3v1h-3zM854 556h1v1h-1zM856 556h1v1h-1zM854 557h3v1h-3zM856 558h1v1h-1zM856 559h1v1h-1zM858 556h3v1h-3zM858 557h1v1h-1zM860 557h1v1h-1zM858 558h1v1h-1zM860 558h1v1h-1zM858 559h3v1h-3zM861 558h3v1h-3zM865 556h1v1h-1zM867 556h1v1h-1zM865 557h3v1h-3zM867 558h1v1h-1zM867 559h1v1h-1zM868 556h3v1h-3zM868 557h2v1h-2zM870 558h1v1h-1zM868 559h3v1h-3z"/>
<path fill="#00ffff" stroke="none" d="M696 562h3v1h-3zM696 563h2v1h-2zM698 564h1v1h-1zM696 565h3v1h-3z"/>
<path fill="#00ffff" stroke="none" d="M711 562h3v1h-3zM711 563h1v1h-1zM711 564h1v1h-1zM713 564h1v1h-1zM711 565h3v1h-3zM714 562h2v1h-2zM714 563h3v1h-3zM714 564h1v1h-1zM716 564h1v1h-1zM714 565h2v1h-2zM718 562h2v1h-2zM717 563h3v1h-3zM717 564h1v1h-1zM719 564h1v1h-1zM717 565h3v1h-3zM720 562h3v1h-3zM720 563h1v1h-1zM722 563h1v1h-1zM720 564h3v1h-3zM722 565h1v1h-1zM725 562h2v1h-2zM724 563h3v1h-3zM724 564h1v1h-1zM726 564h1v1h-1zM724 565h3v1h-3zM727 564h3v1h-3zM731 562h2v1h-2zM730 563h3v1h-3zM730 564h1v1h-1zM732 564h1v1h-1zM730 565h3v1h-3zM734 562h2v1h-2zM733 563h3v1h-3zM733 564h1v1h-1zM735 564h1v1h-1zM733 565h3v1h-3z"/>
<rect x="756" y="562" width="15" height="5"/>
<path fill="#00ffff" stroke="none" d="M772 562h3v1h-3zM772 563h3v1h-3zM772 564h1v1h-1zM774 564h1v1h-1zM772 565h1v1h-1zM774 565h1v1h-1zM777 562h1v1h-1zM776 563h2v1h-2zM777 564h1v1h-1zM777 565h1v1h-1zM779 562h3v1h-3zM780 563h2v1h-2zM779 564h1v1h-1zM779 565h3v1h-3z"/>
<path fill="#00ffff" stroke="none" d="M789 562h3v1h-3zM790 563h2v1h-2zM789 564h1v1h-1zM789 565h3v1h-3z"/>
<path fill="#00ffff" stroke="none" d="M812 562h3v1h-3zM812 563h1v1h-1zM814 563h1v1h-1zM812 564h3v1h-3zM814 565h1v1h-1zM815 562h3v1h-3zM816 563h2v1h-2zM815 564h1v1h-1zM815 565h3v1h-3zM818 562h3v1h-3zM819 563h2v1h-2zM820 564h1v1h-1zM818 565h3v1h-3zM822 562h3v1h-3zM822 563h2v1h-2zM824 564h1v1h-1zM822 565h3v1h-3z"/>
<path fill="#00ffff" stroke="none" d="M843 563h1v1h-1zM845 563h1v1h-1zM843 564h3v1h-3zM843 565h1v1h-1zM845 565h1v1h-1zM843 566h1v1h-1zM845 566h1v1h-1zM847 563h2v1h-2zM847 564h1v1h-1zM849 564h1v1h-1zM847 565h2v1h-2zM847 566h1v1h-1zM849 566h1v1h-1zM850 563h3v1h-3zM850 564h1v1h-1zM850 565h1v1h-1zM850 566h3v1h-3zM854 563h3v1h-3zM855 564h2v1h-2zM856 565h1v1h-1zM854 566h3v1h-3zM858 563h3v1h-3zM858 564h2v1h-2zM860 565h1v1h-1zM858 566h3v1h-3zM861 565h3v1h-3zM865 563h1v1h-1zM867 563h1v1h-1zM865 564h3v1h-3zM867 565h1v1h-1zM867 566h1v1h-1zM868 563h3v1h-3zM868 564h1v1h-1zM870 564h1v1h-1zM868 565h1v1h-1zM870 565h1v1h-1zM868 566h3v1h-3z"/>
<path fill="#00ffff" stroke="none" d="M696 569h1v1h-1zM698 569h1v1h-1zM696 570h3v1h-3zM698 571h1v1h-1zM698 572h1v1h-1z"/>
<path fill="#00ffff" stroke="none" d="M709 569h3v1h-3zM709 570h1v1h-1zM709 571h1v1h-1zM711 571h1v1h-1zM709 572h3v1h-3zM712 569h2v1h-2zM712 570h3v1h-3zM712 571h1v1h-1zM714 571h1v1h-1zM712 572h2v1h-2zM716 569h3v1h-3zM717 570h2v1h-2zM716 571h1v1h-1zM716 572h3v1h-3zM720 569h1v1h-1zM719 570h2v1h-2zM720 571h1v1h-1zM720 572h1v1h-1zM722 569h1v1h-1zM722 570h3v1h-3zM722 571h1v1h-1zM724 571h1v1h-1zM722 572h3v1h-3zM725 569h3v1h-3zM725 570h1v1h-1zM727 570h1v1h-1zM725 571h1v1h-1zM727 571h1v1h-1zM725 572h3v1h-3zM728 571h3v1h-3zM732 569h2v1h-2zM731 570h3v1h-3zM731 571h1v1h-1zM733 571h1v1h-1zM731 572h3v1h-3zM734 569h3v1h-3zM734 570h1v1h-1zM736 570h1v1h-1zM734 571h1v1h-1zM736 571h1v1h-1zM734 572h3v1h-3z"/>
<rect x="756" y="569" width="18" height="5"/>
<path fill="#00ffff" stroke="none" d="M790 569h1v1h-1zM789 570h2v1h-2zM790 571h1v1h-1zM790 572h1v1h-1z"/>
<path fill="#00ffff" stroke="none" d="M812 569h1v1h-1zM814 569h1v1h-1zM812 570h3v1h-3zM814 571h1v1h-1zM814 572h1v1h-1zM815 569h3v1h-3zM815 570h2v1h-2zM817 571h1v1h-1zM815 572h3v1h-3z"/>
<rect x="818" y="569" width="6" height="5"/>
<path fill="#00ffff" stroke="none" d="M843 570h1v1h-1zM845 570h1v1h-1zM843 571h3v1h-3zM843 572h1v1h-1zM845 572h1v1h-1zM843 573h1v1h-1zM845 573h1v1h-1zM847 570h2v1h-2zM847 571h1v1h-1zM849 571h1v1h-1zM847 572h2v1h-2zM847 573h1v1h-1zM849 573h1v1h-1zM850 570h3v1h-3zM850 571h1v1h-1zM850 572h1v1h-1zM850 573h3v1h-3zM854 570h1v1h-1zM856 570h1v1h-1zM854 571h3v1h-3zM856 572h1v1h-1zM856 573h1v1h-1zM858 570h3v1h-3zM858 571h1v1h-1zM860 571h1v1h-1zM858 572h1v1h-1zM860 572h1v1h-1zM858 573h3v1h-3zM861 572h3v1h-3zM865 570h1v1h-1zM867 570h1v1h-1zM865 571h3v1h-3zM867 572h1v1h-1zM867 573h1v1h-1zM868 570h3v1h-3zM868 571h2v1h-2zM870 572h1v1h-1zM868 573h3v1h-3z"/>
<path fill="#00ffff" stroke="none" d="M696 576h3v1h-3zM697 577h2v1h-2zM698 578h1v1h-1zM696 579h3v1h-3z"/>
<path fill="#00ffff" stroke="none" d="M712 576h3v1h-3zM712 577h1v1h-1zM712 578h1v1h-1zM714 578h1v1h-1zM712 579h3v1h-3zM716 576h2v1h-2zM716 577h3v1h-3zM716 578h1v1h-1zM718 578h1v1h-1zM716 579h2v1h-2zM719 576h3v1h-3zM719 577h1v1h-1zM721 577h1v1h-1zM719 578h3v1h-3zM721 579h1v1h-1zM722 576h1v1h-1zM722 577h3v1h-3zM722 578h1v1h-1zM724 578h1v1h-1zM722 579h3v1h-3zM725 578h3v1h-3zM729 576h2v1h-2zM728 577h3v1h-3zM728 578h1v1h-1zM730 578h1v1h-1zM728 579h3v1h-3zM732 576h2v1h-2zM731 577h3v1h-3zM731 578h1v1h-1zM733 578h1v1h-1zM731 579h3v1h-3z"/>
<rect x="746" y="576" width="22" height="5"/>
<path fill="#00ffff" stroke="none" d="M769 576h3v1h-3zM769 577h3v1h-3zM769 578h1v1h-1zM771 578h1v1h-1zM769 579h1v1h-1zM771 579h1v1h-1zM773 576h2v1h-2zM772 577h3v1h-3zM772 578h1v1h-1zM774 578h1v1h-1zM772 579h3v1h-3zM776 577h1v1h-1zM778 577h1v1h-1zM777 578h1v1h-1zM776 579h1v1h-1zM778 579h1v1h-1zM780 576h3v1h-3zM781 577h2v1h-2zM782 578h1v1h-1zM780 579h3v1h-3zM783 576h3v1h-3zM783 577h1v1h-1zM785 577h1v1h-1zM783 578h1v1h-1zM785 578h1v1h-1zM783 579h3v1h-3z"/>
<path fill="#00ffff" stroke="none" d="M789 576h1v1h-1zM788 577h2v1h-2zM789 578h1v1h-1zM789 579h1v1h-1zM792 576h3v1h-3zM793 577h2v1h-2zM792 578h1v1h-1zM792 579h3v1h-3z"/>
<path fill="#00ffff" stroke="none" d="M812 576h1v1h-1zM814 576h1v1h-1zM812 577h3v1h-3zM814 578h1v1h-1zM814 579h1v1h-1zM815 576h3v1h-3zM815 577h1v1h-1zM817 577h1v1h-1zM815 578h1v1h-1zM817 578h1v1h-1zM815 579h3v1h-3z"/>
<rect x="818" y="576" width="6" height="5"/>
<path fill="#00ffff" stroke="none" d="M843 577h1v1h-1zM845 577h1v1h-1zM843 578h3v1h-3zM843 579h1v1h-1zM845 579h1v1h-1zM843 580h1v1h-1zM845 580h1v1h-1zM847 577h2v1h-2zM847 578h1v1h-1zM849 578h1v1h-1zM847 579h2v1h-2zM847 580h1v1h-1zM849 580h1v1h-1zM850 577h3v1h-3zM850 578h1v1h-1zM850 579h1v1h-1zM850 580h3v1h-3zM854 577h3v1h-3zM855 578h2v1h-2zM856 579h1v1h-1zM854 580h3v1h-3zM858 577h3v1h-3zM858 578h2v1h-2zM860 579h1v1h-1zM858 580h3v1h-3zM861 579h3v1h-3zM865 577h1v1h-1zM867 577h1v1h-1zM865 578h3v1h-3zM867 579h1v1h-1zM867 580h1v1h-1zM868 577h3v1h-3zM868 578h1v1h-1zM870 578h1v1h-1zM868 579h1v1h-1zM870 579h1v1h-1zM868 580h3v1h-3z"/>
<path fill="#00ffff" stroke="none" d="M696 583h3v1h-3zM697 584h2v1h-2zM696 585h1v1h-1zM696 586h3v1h-3z"/>
<path fill="#00ffff" stroke="none" d="M709 583h2v1h-2zM709 584h3v1h-3zM709 585h1v1h-1zM711 585h1v1h-1zM709 586h2v1h-2zM712 583h3v1h-3zM712 584h2v1h-2zM713 585h2v1h-2zM712 586h3v1h-3zM716 583h1v1h-1zM718 583h1v1h-1zM717 584h1v1h-1zM717 585h1v1h-1zM716 586h1v1h-1zM718 586h1v1h-1zM719 585h3v1h-3zM722 583h3v1h-3zM722 584h1v1h-1zM724 584h1v1h-1zM722 585h1v1h-1zM724 585h1v1h-1zM722 586h3v1h-3zM726 583h1v1h-1zM725 584h2v1h-2zM726 585h1v1h-1zM726 586h1v1h-1zM728 585h3v1h-3zM731 583h3v1h-3zM731 584h1v1h-1zM733 584h1v1h-1zM731 585h1v1h-1zM733 585h1v1h-1zM731 586h3v1h-3zM734 583h1v1h-1zM734 584h3v1h-3zM734 585h1v1h-1zM736 585h1v1h-1zM734 586h3v1h-3z"/>
<rect x="756" y="583" width="15" height="5"/>
<path fill="#00ffff" stroke="none" d="M790 583h1v1h-1zM789 584h2v1h-2zM790 585h1v1h-1zM790 586h1v1h-1z"/>
<path fill="#00ffff" stroke="none" d="M812 583h1v1h-1zM814 583h1v1h-1zM812 584h3v1h-3zM814 585h1v1h-1zM814 586h1v1h-1zM815 583h3v1h-3zM815 584h2v1h-2zM817 585h1v1h-1zM815 586h3v1h-3z"/>
<rect x="818" y="583" width="6" height="5"/>
<path fill="#00ffff" stroke="none" d="M697 590h1v1h-1zM696 591h2v1h-2zM697 592h1v1h-1zM697 593h1v1h-1z"/>
<path fill="#00ffff" stroke="none" d="M709 590h2v1h-2zM709 591h3v1h-3zM709 592h1v1h-1zM711 592h1v1h-1zM709 593h2v1h-2zM712 590h3v1h-3zM712 591h2v1h-2zM713 592h2v1h-2zM712 593h3v1h-3zM716 590h1v1h-1zM718 590h1v1h-1zM717 591h1v1h-1zM717 592h1v1h-1zM716 593h1v1h-1zM718 593h1v1h-1zM719 592h3v1h-3zM722 590h3v1h-3zM722 591h1v1h-1zM724 591h1v1h-1zM722 592h1v1h-1zM724 592h1v1h-1zM722 593h3v1h-3zM726 590h1v1h-1zM725 591h2v1h-2zM726 592h1v1h-1zM726 593h1v1h-1zM728 592h3v1h-3zM731 590h3v1h-3zM731 591h1v1h-1zM733 591h1v1h-1zM731 592h1v1h-1zM733 592h1v1h-1zM731 593h3v1h-3zM735 590h2v1h-2zM734 591h3v1h-3zM734 592h1v1h-1zM736 592h1v1h-1zM734 593h3v1h-3z"/>
<rect x="756" y="590" width="10" height="5"/>
<path fill="#00ffff" stroke="none" d="M790 590h1v1h-1zM789 591h2v1h-2zM790 592h1v1h-1zM790 593h1v1h-1z"/>
<path fill="#00ffff" stroke="none" d="M812 590h3v1h-3zM813 591h1v1h-1zM813 592h1v1h-1zM813 593h1v1h-1zM816 590h2v1h-2zM815 591h3v1h-3zM815 592h1v1h-1zM817 592h1v1h-1zM815 593h3v1h-3zM819 590h1v1h-1zM818 591h1v1h-1zM820 591h1v1h-1zM818 592h3v1h-3zM818 593h1v1h-1zM820 593h1v1h-1z"/>
<path fill="#00ffff" stroke="none" d="M843 591h1v1h-1zM845 591h1v1h-1zM843 592h3v1h-3zM843 593h1v1h-1zM845 593h1v1h-1zM843 594h1v1h-1zM845 594h1v1h-1zM847 591h2v1h-2zM847 592h1v1h-1zM849 592h1v1h-1zM847 593h2v1h-2zM847 594h1v1h-1zM849 594h1v1h-1zM850 591h3v1h-3zM850 592h1v1h-1zM850 593h1v1h-1zM850 594h3v1h-3zM854 591h3v1h-3zM854 592h2v1h-2zM856 593h1v1h-1zM854 594h3v1h-3zM858 591h3v1h-3zM858 592h2v1h-2zM860 593h1v1h-1zM858 594h3v1h-3zM861 593h3v1h-3zM865 591h1v1h-1zM865 592h3v1h-3zM865 593h1v1h-1zM867 593h1v1h-1zM865 594h3v1h-3zM868 591h3v1h-3zM868 592h1v1h-1zM870 592h1v1h-1zM868 593h1v1h-1zM870 593h1v1h-1zM868 594h3v1h-3z"/>
</g>
<g fill="#00ffff">
<rect x="696" y="598" width="6" height="5"/><rect x="696" y="605" width="6" height="4"/>
<rect x="717" y="600" width="10" height="5"/><rect x="757" y="601" width="10" height="5"/>
<rect x="788" y="597" width="6" height="5"/><rect x="788" y="604" width="6" height="5"/>
<rect x="812" y="601" width="10" height="5"/><rect x="852" y="600" width="10" height="5"/>
<rect x="697" y="611" width="10" height="5"/><rect x="697" y="618" width="9" height="5"/><rect x="697" y="625" width="9" height="5"/>
<rect x="776" y="625" width="15" height="5"/>
<rect x="815" y="611" width="10" height="5"/><rect x="815" y="618" width="10" height="5"/>
<rect x="846" y="618" width="10" height="5"/>
<path fill="#00ffff" stroke="none" d="M840 612h3v1h-3zM840 613h1v1h-1zM842 613h1v1h-1zM840 614h1v1h-1zM842 614h1v1h-1zM840 615h1v1h-1zM842 615h1v1h-1zM840 616h3v1h-3zM844 612h3v1h-3zM844 613h1v1h-1zM844 614h3v1h-3zM844 615h1v1h-1zM846 615h1v1h-1zM844 616h3v1h-3z"/>
<path fill="#00ffff" stroke="none" d="M833 618h1v1h-1zM832 619h2v1h-2zM833 620h1v1h-1zM833 621h1v1h-1zM833 622h1v1h-1zM836 619h1v1h-1zM836 621h1v1h-1zM839 618h1v1h-1zM838 619h2v1h-2zM839 620h1v1h-1zM839 621h1v1h-1zM839 622h1v1h-1z"/>
<path fill="#00ffff" stroke="none" d="M866 618h1v1h-1zM865 619h2v1h-2zM866 620h1v1h-1zM866 621h1v1h-1zM866 622h1v1h-1z"/>
</g>
<path d="M769.5 614.5V619.5H772.5V614.5ZM769.5 616.5H772.5M768.5 620.5L769.5 619.5M773.5 620.5L772.5 619.5M775.5 616.5H780.5M778.5 614.5V618.5M775.5 620.5L778.5 618.5L780.5 620.5M776.5 615.5H779.5M782.5 616.5H787.5M785.5 614.5V618.5M782.5 620.5L785.5 618.5L787.5 620.5M783.5 615.5H786.5M789.5 615.5H794.5M790.5 615.5V620.5M793.5 615.5V620.5M790.5 617.5H793.5M789.5 620.5H794.5M792.5 614.5V615.5" stroke="#00ffff" opacity="0.85"/>
<g stroke="#00ffff"><path d="M695 616.5H755.5M695 623.5H755.5M814.5 616.5H874.5M814.5 623.5H874.5M710.5 609.5V630M740.5 609.5V630M755.5 609.5V630M814.5 609.5V630M827.5 609.5V623.5M844.5 616.5V623.5M857.5 616.5V623.5"/></g>
<g stroke="#ffffff"><path d="M695 595.5H874.5M695 609.5H874.5M695.5 469V630"/></g>
</g>
</svg>
</body></html>
